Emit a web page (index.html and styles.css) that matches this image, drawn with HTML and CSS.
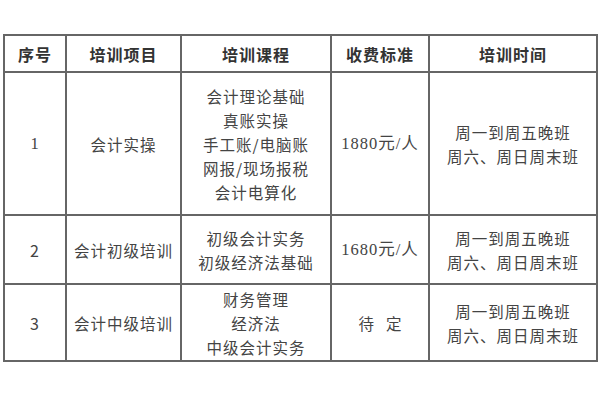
FILE: index.html
```html
<!DOCTYPE html>
<html lang="zh-CN">
<head>
<meta charset="utf-8">
<link rel="stylesheet" href="styles.css">
</head>
<body>
<div class="page">
<table class="tbl">
  <colgroup>
    <col class="c1"><col class="c2"><col class="c3"><col class="c4"><col class="c5">
  </colgroup>
  <thead>
    <tr class="hd">
      <th>序号</th><th>培训项目</th><th>培训课程</th><th>收费标准</th><th>培训时间</th>
    </tr>
  </thead>
  <tbody>
    <tr class="r1">
      <td class="num serif">1</td>
      <td>会计实操</td>
      <td>会计理论基础<br>真账实操<br>手工账/电脑账<br>网报/现场报税<br>会计电算化</td>
      <td class="serif">1880元/人</td>
      <td>周一到周五晚班<br>周六、周日周末班</td>
    </tr>
    <tr class="r2">
      <td class="num">2</td>
      <td>会计初级培训</td>
      <td>初级会计实务<br>初级经济法基础</td>
      <td class="serif">1680元/人</td>
      <td>周一到周五晚班<br>周六、周日周末班</td>
    </tr>
    <tr class="r3">
      <td class="num">3</td>
      <td>会计中级培训</td>
      <td>财务管理<br>经济法<br>中级会计实务</td>
      <td class="wide">待定</td>
      <td>周一到周五晚班<br>周六、周日周末班</td>
    </tr>
  </tbody>
</table>
</div>
</body>
</html>
```

FILE: styles.css
```css
html, body {
  margin: 0;
  padding: 0;
  background: #ffffff;
}
.page {
  width: 600px;
  height: 400px;
  padding: 34px 0 0 3px;
  box-sizing: border-box;
}
.tbl {
  border-collapse: collapse;
  table-layout: fixed;
  width: 593px;
  font-family: "Noto Sans CJK SC", sans-serif;
  color: #444444;
}
.c1 { width: 62px; }
.c2 { width: 115px; }
.c3 { width: 150px; }
.c4 { width: 98px; }
.c5 { width: 168px; }
.tbl th, .tbl td {
  border: 2px solid #666666;
  text-align: center;
  vertical-align: middle;
  padding: 0;
}
.tbl th {
  font-size: 16px;
  font-weight: 700;
  color: #333333;
  height: 35px;
  letter-spacing: 1px;
}
.tbl td {
  font-size: 15.5px;
  line-height: 24px;
  letter-spacing: 1px;
}
.r1 td { height: 141px; }
.r2 td { height: 67px; }
.r3 td { height: 75px; }
.tbl .num { font-size: 16px; }
.tbl .serif { font-family: "Liberation Serif", "Noto Sans CJK SC", serif; font-size: 16.5px; }
.tbl .wide { letter-spacing: 12px; padding-left: 12px; }
```
